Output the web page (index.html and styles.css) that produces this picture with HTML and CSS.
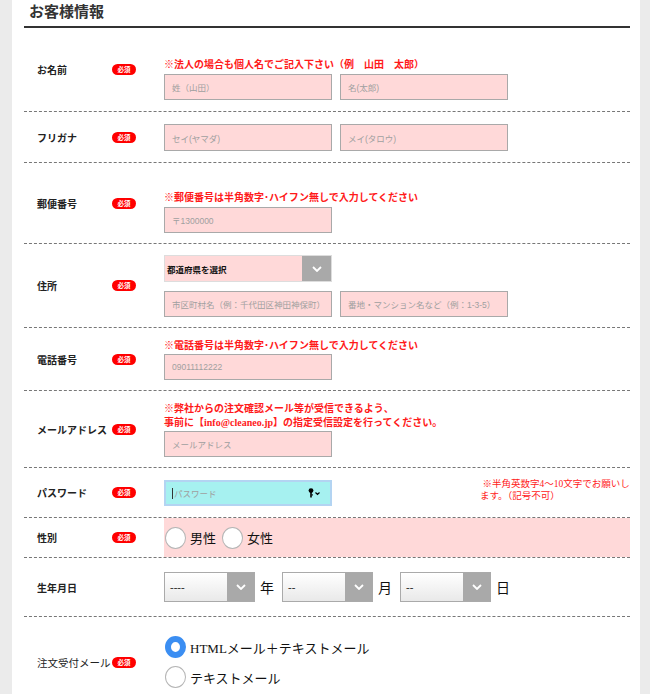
FILE: index.html
```html
<!DOCTYPE html>
<html lang="ja">
<head>
<meta charset="utf-8">
<title>お客様情報</title>
<link rel="stylesheet" href="styles.css">
</head>
<body>
<div class="panel">
  <h2 class="heading">お客様情報</h2>

  <div class="row">
    <div class="label"><span class="label-text">お名前</span><span class="badge">必須</span></div>
    <div class="field pad-lead1">
      <p class="note">※法人の場合も個人名でご記入下さい（例　山田　太郎）</p>
      <div class="pair">
        <div class="input"><span class="ph">姓（山田）</span></div>
        <div class="input"><span class="ph">名(太郎)</span></div>
      </div>
    </div>
  </div>

  <div class="row">
    <div class="label"><span class="label-text">フリガナ</span><span class="badge">必須</span></div>
    <div class="field pad-simple">
      <div class="pair">
        <div class="input tall"><span class="ph">セイ(ヤマダ)</span></div>
        <div class="input tall"><span class="ph">メイ(タロウ)</span></div>
      </div>
    </div>
  </div>

  <div class="row">
    <div class="label"><span class="label-text">郵便番号</span><span class="badge">必須</span></div>
    <div class="field pad-lead2">
      <p class="note">※郵便番号は半角数字･ハイフン無しで入力してください</p>
      <div class="input"><span class="ph">〒1300000</span></div>
    </div>
  </div>

  <div class="row">
    <div class="label"><span class="label-text">住所</span><span class="badge">必須</span></div>
    <div class="field pad-addr">
      <div class="select pref">
        <span class="sel-text">都道府県を選択</span>
        <span class="sel-arrow"><svg width="10" height="6" viewBox="0 0 10 6"><path d="M1 1l4 4 4-4" fill="none" stroke="#fff" stroke-width="1.8"/></svg></span>
      </div>
      <div class="pair">
        <div class="input"><span class="ph">市区町村名（例：千代田区神田神保町）</span></div>
        <div class="input"><span class="ph">番地・マンション名など（例：1-3-5）</span></div>
      </div>
    </div>
  </div>

  <div class="row">
    <div class="label"><span class="label-text">電話番号</span><span class="badge">必須</span></div>
    <div class="field pad-std">
      <p class="note">※電話番号は半角数字･ハイフン無しで入力してください</p>
      <div class="input"><span class="ph">09011112222</span></div>
    </div>
  </div>

  <div class="row">
    <div class="label"><span class="label-text">メールアドレス</span><span class="badge">必須</span></div>
    <div class="field pad-std">
      <p class="note">※弊社からの注文確認メール等が受信できるよう、<br>事前に【info@cleaneo.jp】の指定受信設定を行ってください。</p>
      <div class="input"><span class="ph">メールアドレス</span></div>
    </div>
  </div>

  <div class="row">
    <div class="label"><span class="label-text">パスワード</span><span class="badge">必須</span></div>
    <div class="field pad-simple inline">
      <div class="input focus">
        <span class="caret"></span><span class="ph">パスワード</span>
        <svg class="key" width="14" height="10" viewBox="0 0 14 10"><circle cx="3" cy="2.6" r="2.4" fill="#000"/><rect x="2.2" y="4" width="1.6" height="5.5" fill="#000"/><rect x="3.5" y="6.3" width="1.4" height="1.2" fill="#000"/><path d="M7.5 4.5l2 2 2-2" fill="none" stroke="#000" stroke-width="1.2"/></svg>
      </div>
      <p class="side-note">&nbsp;※半角英数字4〜10文字でお願いし<br>ます。（記号不可）</p>
    </div>
  </div>

  <div class="row">
    <div class="label"><span class="label-text">性別</span><span class="badge">必須</span></div>
    <div class="field gender">
      <label class="radio"><span class="dot"></span><span>男性</span></label>
      <label class="radio"><span class="dot"></span><span>女性</span></label>
    </div>
  </div>

  <div class="row">
    <div class="label"><span class="label-text">生年月日</span></div>
    <div class="field birth">
      <div class="select date"><span class="sel-text">----</span><span class="sel-arrow"><svg width="10" height="6" viewBox="0 0 10 6"><path d="M1 1l4 4 4-4" fill="none" stroke="#fff" stroke-width="1.8"/></svg></span></div>
      <span class="unit">年</span>
      <div class="select date"><span class="sel-text">--</span><span class="sel-arrow"><svg width="10" height="6" viewBox="0 0 10 6"><path d="M1 1l4 4 4-4" fill="none" stroke="#fff" stroke-width="1.8"/></svg></span></div>
      <span class="unit">月</span>
      <div class="select date"><span class="sel-text">--</span><span class="sel-arrow"><svg width="10" height="6" viewBox="0 0 10 6"><path d="M1 1l4 4 4-4" fill="none" stroke="#fff" stroke-width="1.8"/></svg></span></div>
      <span class="unit">日</span>
    </div>
  </div>

  <div class="row">
    <div class="label"><span class="label-text light">注文受付メール</span><span class="badge">必須</span></div>
    <div class="field mail">
      <label class="radio"><span class="dot on"></span><span>HTMLメール＋テキストメール</span></label>
      <label class="radio"><span class="dot"></span><span>テキストメール</span></label>
    </div>
  </div>
</div>
</body>
</html>
```

FILE: styles.css
```css
html, body {
  margin: 0;
  padding: 0;
  background: #ebebeb;
}
body {
  font-family: "Liberation Serif", "Noto Sans CJK JP", serif;
  color: #222;
}
.panel {
  margin-left: 12px;
  width: 628px;
  box-sizing: border-box;
  padding: 0 10px 0 12px;
  background: #fff;
  min-height: 720px;
}
.heading {
  margin: 0;
  padding: 2px 0 0 5px;
  height: 28px;
  box-sizing: border-box;
  font-size: 15px;
  line-height: 20px;
  font-weight: bold;
  color: #333;
  border-bottom: 2px solid #333;
}
.row {
  display: grid;
  grid-template-columns: 140px 1fr;
  border-bottom: 1px dashed #777;
}
.label {
  display: flex;
  align-items: center;
  padding-left: 13px;
}
.label-text {
  width: 75px;
  font-size: 10px;
  font-weight: bold;
  color: #222;
  white-space: nowrap;
}
.label-text.light {
  font-weight: normal;
  font-size: 10.5px;
}
.badge {
  display: inline-block;
  width: 24px;
  height: 11px;
  border-radius: 6px;
  background: #f00;
  color: #fff;
  font-size: 6.5px;
  line-height: 11px;
  text-align: center;
  font-weight: bold;
}
.field {
  display: flex;
  flex-direction: column;
}
.pad-lead1 { padding: 30px 0 11px; }
.pad-lead2 { padding: 28px 0 10px; }
.pad-simple { padding: 12px 0 11px; }
.pad-addr { padding: 11px 0 10px; }
.pad-std { padding: 11px 0 10px; }
.note {
  margin: 0 0 1px;
  font-size: 10px;
  line-height: 14px;
  font-weight: bold;
  color: #ff1a1a;
}
.pad-lead1 .note, .pad-lead2 .note { margin-bottom: 2px; }
.pair {
  display: flex;
  gap: 8px;
}
.input {
  width: 168px;
  height: 26px;
  box-sizing: border-box;
  border: 1px solid #a9a9a9;
  background: #ffd9d9;
  display: flex;
  align-items: center;
  padding-left: 7px;
}
.input.tall { height: 27px; }
.ph {
  font-family: "Liberation Sans", "Noto Sans CJK JP", sans-serif;
  font-size: 8.5px;
  color: #a0a0a0;
  white-space: nowrap;
}
.select {
  display: flex;
  box-sizing: border-box;
  border: 1px solid #aaa;
  align-items: stretch;
}
.select.pref {
  width: 168px;
  height: 27px;
  background: #ffd9d9;
  border-color: #ddd;
  margin-bottom: 9px;
}
.sel-text {
  flex: 1;
  display: flex;
  align-items: center;
  padding-left: 2px;
  font-size: 8.5px;
  font-weight: bold;
  color: #111;
}
.sel-arrow {
  width: 29px;
  background: #a9a9a9;
  display: flex;
  align-items: center;
  justify-content: center;
}
.inline {
  flex-direction: row;
  align-items: flex-start;
}
.input.focus {
  background: #a6f1f0;
  border: 2px solid #b3d4f2;
  padding-left: 6px;
}
.caret {
  width: 1px;
  height: 11px;
  background: #333;
  margin-right: 1px;
}
.key {
  margin-left: auto;
  margin-right: 8px;
}
.side-note {
  margin: -2px 2px 0 auto;
  width: 148px;
  font-size: 9.5px;
  line-height: 12px;
  color: #ff1a1a;
  white-space: nowrap;
}
.gender {
  flex-direction: row;
  align-items: center;
  background: #ffd9d9;
  height: 39px;
  gap: 5px;
}
.radio {
  display: flex;
  align-items: center;
  font-size: 13px;
  color: #111;
  gap: 4px;
}
.dot {
  width: 21px;
  height: 22px;
  box-sizing: border-box;
  border-radius: 50%;
  border: 1px solid #b5b5b5;
  background: #fff;
  margin-left: 1px;
}
.dot.on {
  border: 6px solid #3b8ef2;
}
.birth {
  flex-direction: row;
  align-items: center;
  padding: 14px 0 14px;
}
.select.date {
  width: 91px;
  height: 30px;
  background: linear-gradient(#fff, #e9e9e9);
  border-color: #aaa;
}
.select.date .sel-text {
  padding-left: 5px;
  font-size: 11px;
  font-weight: normal;
}
.select.date .sel-arrow {
  width: 27px;
}
.unit {
  font-size: 14px;
  margin: 0 8px 0 5px;
  color: #111;
}
.mail {
  padding: 15px 0 15px;
}
.mail .radio {
  height: 30px;
}
```
